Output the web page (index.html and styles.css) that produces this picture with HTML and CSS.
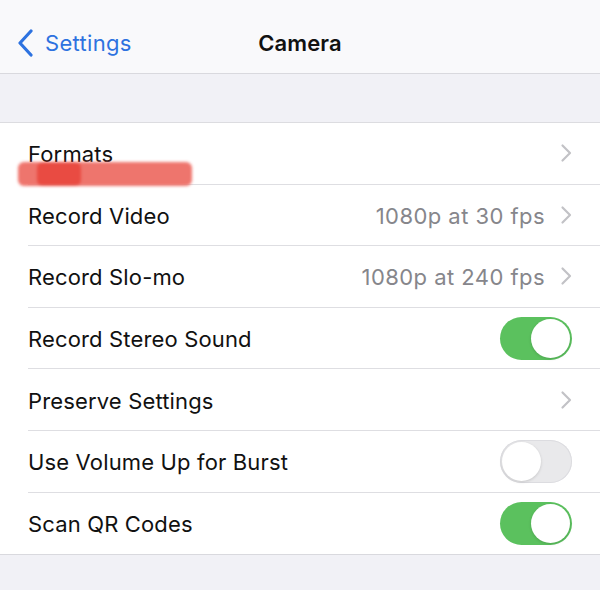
FILE: index.html
```html
<!DOCTYPE html>
<html>
<head>
<meta charset="utf-8">
<link rel="stylesheet" href="styles.css">
</head>
<body>
<div class="nav">
  <div class="back">
    <svg class="back-chev" width="17" height="28" viewBox="0 0 17 28"><path d="M14 2 L3 14 L14 26" fill="none" stroke="#2d72e0" stroke-width="3.2" stroke-linecap="round" stroke-linejoin="round"/></svg>
    <span>Settings</span>
  </div>
  <div class="title">Camera</div>
</div>
<div class="band"></div>
<div class="list">
  <div class="row">
    <span class="label">Formats</span>
    <span class="right"><svg class="chev" width="13" height="20" viewBox="0 0 13 20"><path d="M2.5 2.5 L10 10 L2.5 17.5" fill="none" stroke="#c2c2c6" stroke-width="2.2" stroke-linecap="round" stroke-linejoin="round"/></svg></span>
    <div class="redact"><div class="redact-dark"></div></div>
  </div>
  <div class="row">
    <span class="label">Record Video</span>
    <span class="right"><span class="value">1080p at 30 fps</span><svg class="chev" width="13" height="20" viewBox="0 0 13 20"><path d="M2.5 2.5 L10 10 L2.5 17.5" fill="none" stroke="#c2c2c6" stroke-width="2.2" stroke-linecap="round" stroke-linejoin="round"/></svg></span>
  </div>
  <div class="row">
    <span class="label">Record Slo-mo</span>
    <span class="right"><span class="value">1080p at 240 fps</span><svg class="chev" width="13" height="20" viewBox="0 0 13 20"><path d="M2.5 2.5 L10 10 L2.5 17.5" fill="none" stroke="#c2c2c6" stroke-width="2.2" stroke-linecap="round" stroke-linejoin="round"/></svg></span>
  </div>
  <div class="row">
    <span class="label">Record Stereo Sound</span>
    <span class="right"><span class="toggle on"><span class="knob"></span></span></span>
  </div>
  <div class="row">
    <span class="label">Preserve Settings</span>
    <span class="right"><svg class="chev" width="13" height="20" viewBox="0 0 13 20"><path d="M2.5 2.5 L10 10 L2.5 17.5" fill="none" stroke="#c2c2c6" stroke-width="2.2" stroke-linecap="round" stroke-linejoin="round"/></svg></span>
  </div>
  <div class="row">
    <span class="label">Use Volume Up for Burst</span>
    <span class="right"><span class="toggle off"><span class="knob"></span></span></span>
  </div>
  <div class="row last">
    <span class="label">Scan QR Codes</span>
    <span class="right"><span class="toggle on"><span class="knob"></span></span></span>
  </div>
</div>
<div class="footer"></div>
</body>
</html>
```
FILE: styles.css
```css
* { box-sizing: border-box; }
html, body { margin: 0; padding: 0; }
body {
  width: 600px;
  height: 590px;
  overflow: hidden;
  background: #f1f1f6;
  font-family: "Inter", "Liberation Sans", sans-serif;
  color: #111;
}
.nav {
  position: relative;
  height: 74px;
  background: #f9f9fb;
  border-bottom: 1px solid #d9d9de;
  display: flex;
  align-items: center;
  justify-content: center;
}
.back {
  position: absolute;
  left: 17px;
  top: 0;
  height: 73px;
  display: flex;
  align-items: center;
  gap: 11px;
  color: #2d72e0;
  font-size: 22px;
  letter-spacing: 0.3px;
  padding-top: 18px;
  padding-bottom: 6px;
}
.back-chev { display: block; }
.title {
  font-size: 22px;
  font-weight: 600;
  color: #111;
  padding-top: 14px;
  padding-bottom: 2px;
  letter-spacing: 0.1px;
}
.band {
  height: 49px;
  background: #f1f1f6;
  border-bottom: 1px solid #dcdce0;
}
.list {
  background: #fff;
  border-bottom: 1px solid #d9d9de;
}
.row {
  position: relative;
  height: 61.6px;
  margin-left: 28px;
  padding-right: 28px;
  display: flex;
  align-items: center;
  justify-content: space-between;
  border-bottom: 1px solid #dedee2;
}
.row.last { border-bottom: none; }
.label {
  font-size: 22px;
  color: #111;
  letter-spacing: 0.15px;
  padding-top: 2px;
}
.right {
  display: flex;
  align-items: center;
  gap: 15px;
}
.value {
  font-size: 22px;
  color: #86868b;
  letter-spacing: 0.45px;
  padding-top: 2px;
}
.chev { display: block; margin-right: -1px; }
.toggle {
  position: relative;
  display: block;
  width: 72px;
  height: 43px;
  border-radius: 22px;
}
.toggle.on { background: #5bc15e; }
.toggle.off { background: #e9e9eb; box-shadow: inset 0 0 0 1px #dcdce0; }
.knob {
  position: absolute;
  top: 2px;
  width: 39px;
  height: 39px;
  border-radius: 50%;
  background: #fff;
  box-shadow: 0 1px 3px rgba(0,0,0,0.15);
}
.toggle.on .knob { left: 31px; }
.toggle.off .knob { left: 2px; }
.redact {
  position: absolute;
  left: -10px;
  top: 39px;
  width: 174px;
  height: 24px;
  background: #ee6e66;
  border-radius: 6px;
  filter: blur(1.5px);
  opacity: 0.95;
}
.redact-dark {
  position: absolute;
  left: 19px;
  top: 0;
  width: 44px;
  height: 24px;
  background: #e84238;
  border-radius: 6px;
}
.footer { height: 40px; }
```
